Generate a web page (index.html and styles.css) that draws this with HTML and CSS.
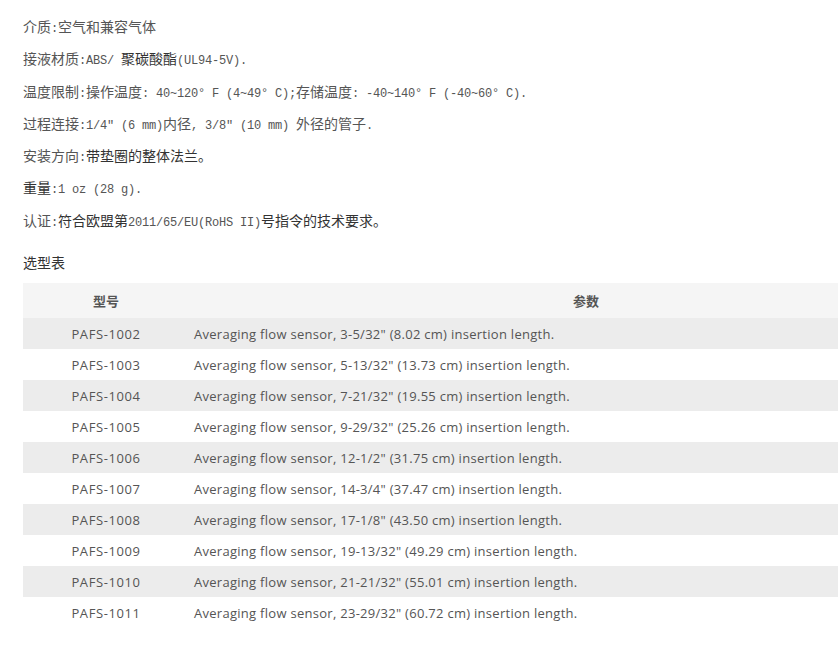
FILE: index.html
```html
<!DOCTYPE html>
<html lang="zh-CN">
<head>
<meta charset="utf-8">
<title>规格</title>
<link rel="stylesheet" href="styles.css">
</head>
<body>
<div class="page">
  <div class="specs">
    <p>介质<span class="m">:</span>空气和兼容气体</p>
    <p>接液材质<span class="m">:ABS/ </span><span class="dk">聚碳酸酯</span><span class="m">(UL94-5V).</span></p>
    <p>温度限制<span class="m">:</span>操作温度<span class="m">: 40~120° F (4~49° C);</span>存储温度<span class="m">: -40~140° F (-40~60° C).</span></p>
    <p>过程连接<span class="m">:1/4″ (6 mm)</span>内径<span class="m">, 3/8″ (10 mm) </span>外径的管子<span class="m">.</span></p>
    <p>安装方向<span class="m">:</span><span class="dk">带垫圈的整体法兰。</span></p>
    <p><span class="dk">重量</span><span class="m">:1 oz (28 g).</span></p>
    <p>认证<span class="m">:</span><span class="dk">符合欧盟第</span><span class="m">2011/65/EU(RoHS II)</span><span class="dk">号指令的技术要求。</span></p>
  </div>
  <h3 class="title">选型表</h3>
  <div class="tablewrap">
    <table class="sel">
      <thead>
        <tr><th class="c1">型号</th><th class="c2">参数</th></tr>
      </thead>
      <tbody>
        <tr><td class="c1">PAFS-1002</td><td class="c2">Averaging flow sensor, 3-5/32" (8.02 cm) insertion length.</td></tr>
        <tr><td class="c1">PAFS-1003</td><td class="c2">Averaging flow sensor, 5-13/32" (13.73 cm) insertion length.</td></tr>
        <tr><td class="c1">PAFS-1004</td><td class="c2">Averaging flow sensor, 7-21/32" (19.55 cm) insertion length.</td></tr>
        <tr><td class="c1">PAFS-1005</td><td class="c2">Averaging flow sensor, 9-29/32" (25.26 cm) insertion length.</td></tr>
        <tr><td class="c1">PAFS-1006</td><td class="c2">Averaging flow sensor, 12-1/2" (31.75 cm) insertion length.</td></tr>
        <tr><td class="c1">PAFS-1007</td><td class="c2">Averaging flow sensor, 14-3/4" (37.47 cm) insertion length.</td></tr>
        <tr><td class="c1">PAFS-1008</td><td class="c2">Averaging flow sensor, 17-1/8" (43.50 cm) insertion length.</td></tr>
        <tr><td class="c1">PAFS-1009</td><td class="c2">Averaging flow sensor, 19-13/32" (49.29 cm) insertion length.</td></tr>
        <tr><td class="c1">PAFS-1010</td><td class="c2">Averaging flow sensor, 21-21/32" (55.01 cm) insertion length.</td></tr>
        <tr><td class="c1">PAFS-1011</td><td class="c2">Averaging flow sensor, 23-29/32" (60.72 cm) insertion length.</td></tr>
      </tbody>
    </table>
  </div>
</div>
</body>
</html>
```
FILE: styles.css
```css
html, body {
  margin: 0;
  padding: 0;
  background: #fff;
  overflow: hidden;
}
.page {
  width: 815px;
  padding: 10px 0 0 23px;
  overflow: hidden;
  font-family: "Noto Sans CJK SC", sans-serif;
  color: #555;
}
.specs p {
  margin: 0;
  font-size: 14px;
  line-height: 32.3px;
  height: 32.3px;
  white-space: nowrap;
}
.specs .m {
  font-family: "Liberation Mono", "DejaVu Sans Mono", monospace;
  font-size: 12px;
  letter-spacing: -0.2px;
}
.specs .dk {
  color: #333;
}
.title {
  margin: 15px 0 0;
  font-size: 14px;
  font-weight: normal;
  color: #333;
  line-height: 22px;
}
.tablewrap {
  margin-top: 10px;
  width: 815px;
  overflow: hidden;
}
.sel {
  width: 960px;
  border-collapse: collapse;
  font-family: "Open Sans", "Noto Sans CJK SC", sans-serif;
  font-size: 13px;
  letter-spacing: 0.28px;
  color: #555;
}
.sel th {
  background: #f5f5f5;
  height: 35px;
  padding: 0;
  font-family: "Noto Sans CJK SC", sans-serif;
  font-weight: bold;
  font-size: 13px;
  letter-spacing: 0;
  text-align: center;
  color: #555;
}
.sel td {
  height: 31px;
  padding: 0;
}
.sel .c1 {
  width: 166px;
  text-align: center;
}
.sel td.c1 {
  letter-spacing: 0.6px;
}
.sel td.c2 {
  padding-left: 5px;
  text-align: left;
}
.sel tbody tr:nth-child(odd) td {
  background: #ececec;
}
```
